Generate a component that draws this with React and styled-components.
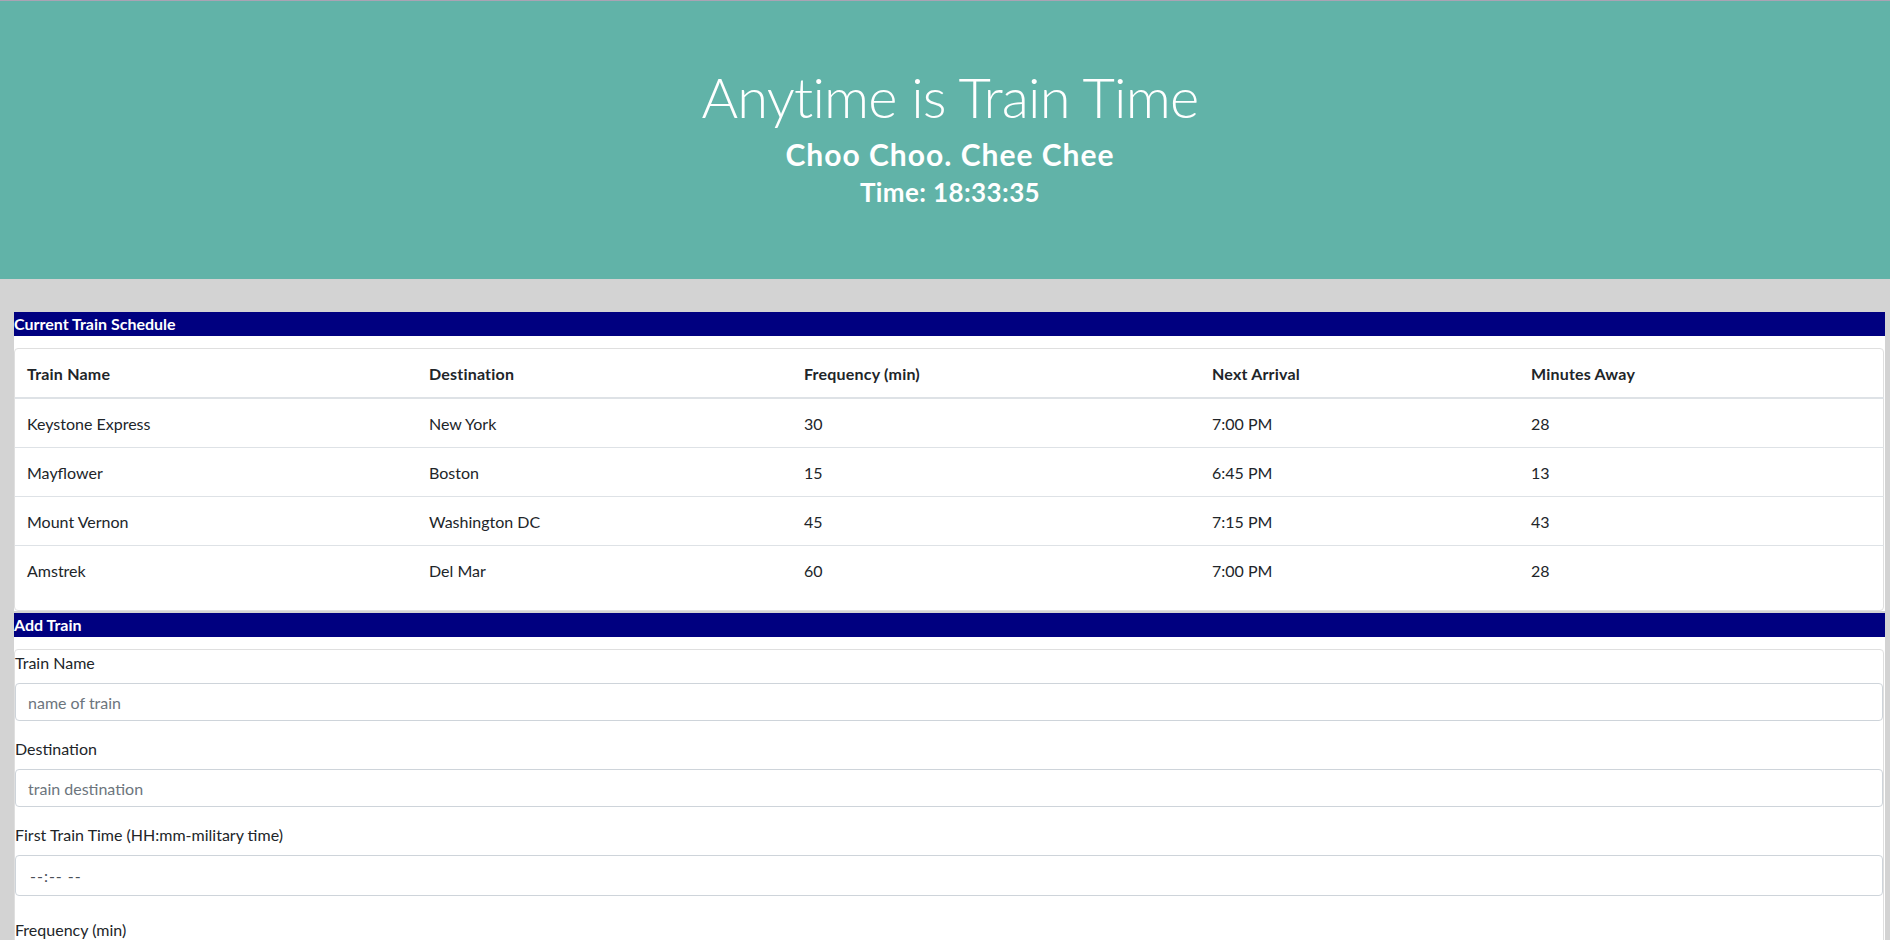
import React from "react";
import styled, { createGlobalStyle } from "styled-components";

const GlobalStyle = createGlobalStyle`
  html, body { margin: 0; padding: 0; }
  body {
    background: #d3d3d3;
    font-family: Lato, "Open Sans", "Liberation Sans", sans-serif;
    font-size: 16px;
    line-height: 1.5;
    color: #212529;
  }
  * { box-sizing: border-box; }
`;

const Page = styled.div`
  display: flex;
  flex-direction: column;
  min-height: 100vh;
`;

const Hero = styled.header`
  background: #61b3a8;
  border-top: 1px solid #aaa3b4;
  height: 279px;
  padding: 62px 0 0 10px;
  display: flex;
  flex-direction: column;
  align-items: center;
  color: #fff;
  text-align: center;
`;

const Title = styled.h1`
  margin: 0 0 6px;
  font-size: 56px;
  font-weight: 300;
  line-height: 1.2;
  letter-spacing: -0.8px;
`;

const Subtitle = styled.h3`
  margin: 0 0 5px;
  font-size: ${(p) => p.$size}px;
  font-weight: 700;
  line-height: 1.2;
  letter-spacing: ${(p) => p.$ls}px;
`;

const Main = styled.main`
  padding: 33px 5px 0 14px;
  display: flex;
  flex-direction: column;
  gap: 2px;
`;

const Panel = styled.section`
  background: #fff;
  display: flex;
  flex-direction: column;
`;

const PanelTitle = styled.div`
  background: #000080;
  color: #fff;
  font-weight: 700;
  font-size: 16px;
  line-height: 24px;
  height: 24px;
  margin-bottom: 12px;
`;

const Card = styled.div`
  border: 1px solid #dfdfdf;
  border-radius: 4px;
  margin-right: ${(p) => p.$mr || 0}px;
  background: #fff;
`;

const Table = styled.table`
  width: 100%;
  border-collapse: collapse;
  margin-bottom: 16px;
  table-layout: fixed;
`;

const Th = styled.th`
  text-align: left;
  font-weight: 700;
  padding: 13px 12px 11px;
  line-height: 24px;
  border-bottom: 2px solid #dee2e6;
  width: ${(p) => p.$w}px;
  letter-spacing: 0.2px;
`;

const Td = styled.td`
  padding: 13px 12px 11px;
  line-height: 24px;
  border-top: 1px solid #dee2e6;
`;

const Row = styled.tr`
  &:first-child td { border-top: none; }
`;

const FormGroup = styled.div`
  display: flex;
  flex-direction: column;
  padding-top: ${(p) => p.$pt || 0}px;
  margin-bottom: ${(p) => p.$mb ?? 16}px;
`;

const Label = styled.label`
  font-size: 16px;
  line-height: 24px;
  margin-bottom: 8px;
`;

const Input = styled.input`
  height: ${(p) => p.$h || 38}px;
  width: 100%;
  padding: 6px 12px;
  border: 1px solid #ced4da;
  border-radius: 4px;
  font-family: inherit;
  font-size: 16px;
  color: #495057;
  background: #fff;
  &::placeholder { color: #6c757d; }
`;

const TimeField = styled.div`
  height: 41px;
  border: 1px solid #ced4da;
  border-radius: 4px;
  padding: 0 14px;
  display: flex;
  align-items: center;
  font-size: 16px;
  color: #495057;
  letter-spacing: 1px;
`;

const SubmitButton = styled.button`
  align-self: flex-start;
  margin: 0 0 16px 0;
  padding: 6px 12px;
  font-family: inherit;
  font-size: 16px;
  color: #fff;
  background: #007bff;
  border: 1px solid #007bff;
  border-radius: 4px;
`;

const columns = [
  { key: "name", label: "Train Name", w: 402 },
  { key: "dest", label: "Destination", w: 375 },
  { key: "freq", label: "Frequency (min)", w: 408 },
  { key: "next", label: "Next Arrival", w: 319 },
  { key: "away", label: "Minutes Away", w: 365 },
];

const trains = [
  { name: "Keystone Express", dest: "New York", freq: "30", next: "7:00 PM", away: "28" },
  { name: "Mayflower", dest: "Boston", freq: "15", next: "6:45 PM", away: "13" },
  { name: "Mount Vernon", dest: "Washington DC", freq: "45", next: "7:15 PM", away: "43" },
  { name: "Amstrek", dest: "Del Mar", freq: "60", next: "7:00 PM", away: "28" },
];

export default function App() {
  return (
    <Page>
      <GlobalStyle />
      <Hero>
        <Title>Anytime is Train Time</Title>
        <Subtitle $size={30} $ls={1}>Choo Choo. Chee Chee</Subtitle>
        <Subtitle $size={26} $ls={0.4}>Time: 18:33:35</Subtitle>
      </Hero>
      <Main>
        <Panel>
          <PanelTitle>Current Train Schedule</PanelTitle>
          <Card $mr={1}>
            <Table>
              <thead>
                <tr>
                  {columns.map((c) => (
                    <Th key={c.key} $w={c.w}>{c.label}</Th>
                  ))}
                </tr>
              </thead>
              <tbody>
                {trains.map((t) => (
                  <Row key={t.name}>
                    {columns.map((c) => (
                      <Td key={c.key}>{t[c.key]}</Td>
                    ))}
                  </Row>
                ))}
              </tbody>
            </Table>
          </Card>
        </Panel>
        <Panel>
          <PanelTitle>Add Train</PanelTitle>
          <Card $mr={1}>
            <FormGroup $pt={1}>
              <Label>Train Name</Label>
              <Input placeholder="name of train" />
            </FormGroup>
            <FormGroup>
              <Label>Destination</Label>
              <Input placeholder="train destination" />
            </FormGroup>
            <FormGroup $mb={22}>
              <Label>First Train Time (HH:mm-military time)</Label>
              <TimeField>--:-- --</TimeField>
            </FormGroup>
            <FormGroup>
              <Label>Frequency (min)</Label>
              <Input placeholder="frequency in minutes" />
            </FormGroup>
            <SubmitButton>Submit</SubmitButton>
          </Card>
        </Panel>
      </Main>
    </Page>
  );
}
